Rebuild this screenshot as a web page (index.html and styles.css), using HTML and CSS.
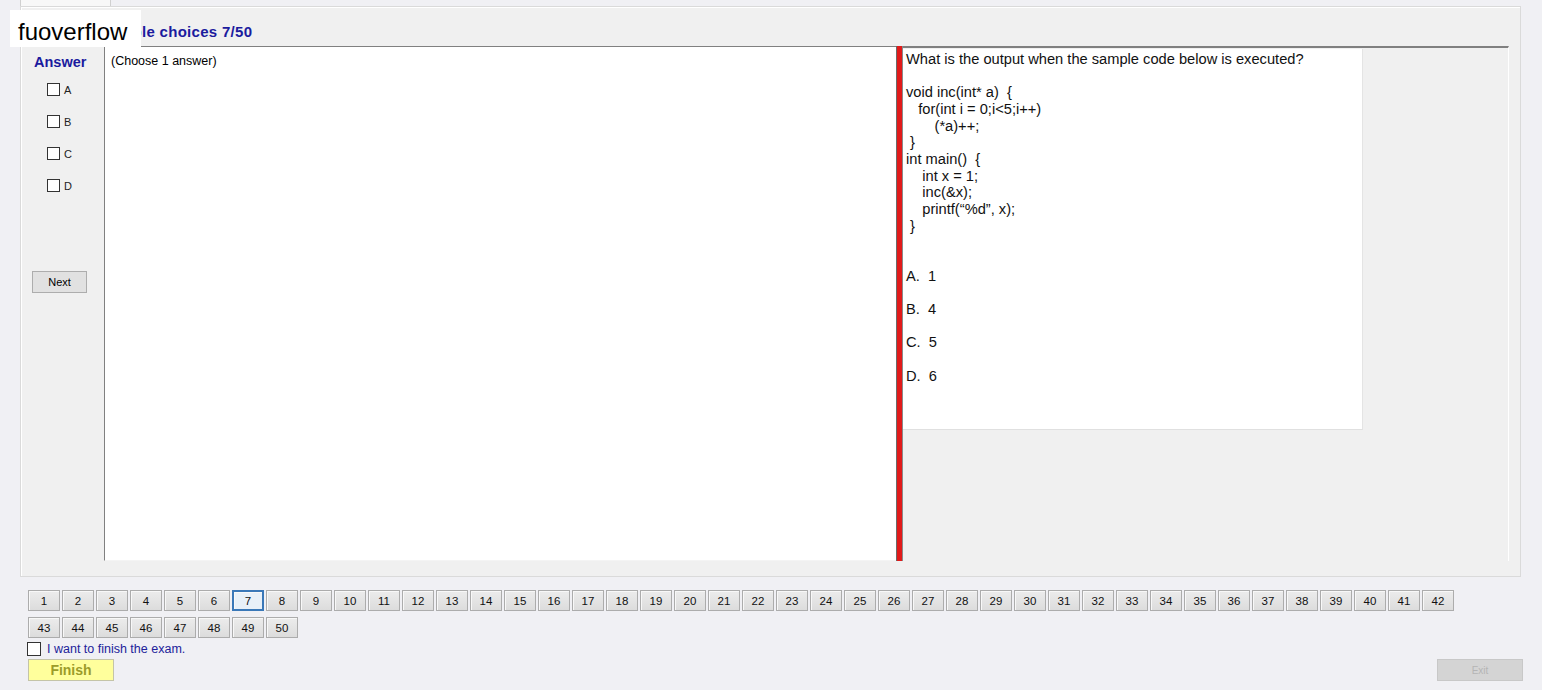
FILE: index.html
```html
<!DOCTYPE html>
<html lang="en">
<head>
    <meta charset="UTF-8">
    <title>Exam</title>
    <link rel="stylesheet" href="styles.css">
</head>
<body>
    <div class="watermark">fuoverflow</div>
    <div class="tabs"><div class="tab"></div></div>
    <div class="page">
        <div class="title">Multiple choices 7/50</div>
        <div class="main">
            <div class="answer-col">
                <div class="answer-title">Answer</div>
                <label class="opt"><span class="box"></span>A</label>
                <label class="opt"><span class="box"></span>B</label>
                <label class="opt"><span class="box"></span>C</label>
                <label class="opt"><span class="box"></span>D</label>
                <button class="btn next">Next</button>
            </div>
            <div class="note-panel">(Choose 1 answer)</div>
            <div class="splitter"></div>
            <div class="question-panel">
                <div class="question">What is the output when the sample code below is executed?

void inc(int* a)  {
   for(int i = 0;i&lt;5;i++)
       (*a)++;
 }
int main()  {
    int x = 1;
    inc(&amp;x);
    printf(“%d”, x);
 }


A.  1

B.  4

C.  5

D.  6</div>
            </div>
        </div>
    </div>
    <div class="numbers" id="numbers"></div>
    <label class="finish-check"><span class="box"></span>I want to finish the exam.</label>
    <div class="bottom">
        <button class="finish">Finish</button>
        <button class="exit">Exit</button>
    </div>
    <script>
        const numbers = document.getElementById('numbers');
        for (let i = 1; i <= 50; i++) {
            const b = document.createElement('button');
            b.className = 'num' + (i === 7 ? ' current' : '');
            b.textContent = i;
            numbers.appendChild(b);
        }
    </script>
</body>
</html>
```

FILE: styles.css
```css
body {
    margin: 0;
    background: #f0f0f4;
    font-family: "Liberation Sans", Arial, sans-serif;
    font-size: 12px;
    color: #000;
    width: 1542px;
    height: 690px;
    overflow: hidden;
}
.watermark {
    position: absolute;
    left: 10px;
    top: 10px;
    width: 131px;
    height: 37px;
    background: #fff;
    font-size: 24px;
    line-height: 37px;
    padding: 3px 0 0 8px;
    box-sizing: border-box;
}
.tabs {
    height: 6px;
    padding-left: 20px;
}
.tab {
    width: 89px;
    height: 6px;
    background: #f8f8f8;
    border-left: 1px solid #d0d0d0;
    border-right: 1px solid #d0d0d0;
}
.page {
    margin-left: 20px;
    width: 1501px;
    height: 571px;
    box-sizing: border-box;
    background: #f0f0f0;
    border: 1px solid #dadada;
    box-shadow: inset 1px 1px #fff;
    padding-left: 7px;
}
.title {
    height: 39px;
    padding-left: 68px;
    box-sizing: border-box;
    padding-top: 16px;
    font-size: 15px;
    letter-spacing: 0.3px;
    font-weight: bold;
    color: #1b1b9e;
}
.main {
    display: flex;
    height: 515px;
    width: 1481px;
}
.answer-col {
    width: 76px;
    display: flex;
    flex-direction: column;
    align-items: flex-start;
}
.answer-title {
    font-size: 14.5px;
    font-weight: bold;
    color: #1b1b9e;
    margin: 8px 0 0 6px;
    height: 17px;
}
.opt {
    display: flex;
    align-items: center;
    height: 13px;
    margin: 12px 0 19px 19px;
    font-size: 11px;
    color: #222;
}
.opt + .opt {
    margin-top: 0;
}
.box {
    width: 11px;
    height: 11px;
    border: 1px solid #333;
    background: #fff;
    margin-right: 6px;
}
.opt .box {
    margin-right: 4px;
}
.btn {
    font-family: inherit;
    font-size: 11px;
    background: #e1e1e1;
    border: 1px solid #adadad;
    padding: 0;
}
.next {
    width: 55px;
    height: 22px;
    margin: 60px 0 0 4px;
}
.note-panel {
    width: 792px;
    box-sizing: border-box;
    background: #fff;
    border-top: 1px solid #808080;
    border-left: 1px solid #808080;
    border-bottom: 1px solid #f4f4f4;
    padding: 7px 0 0 6px;
    font-size: 12.5px;
}
.splitter {
    width: 5px;
    background: #e11a1a;
    border-left: 1px solid #6a6a6a;
    border-right: 1px solid #8a8a8a;
}
.question-panel {
    width: 606px;
    box-sizing: border-box;
    border-top: 2px solid #808080;
    border-right: 1px solid #fff;
    padding-top: 1px;
}
.question {
    width: 460px;
    height: 381px;
    box-sizing: border-box;
    background: #fff;
    border-right: 1px solid #e4e4e4;
    border-bottom: 1px solid #e0e0e0;
    padding: 2px 0 0 3px;
    font-size: 14.67px;
    line-height: 16.67px;
    white-space: pre;
    color: #111;
}
.numbers {
    display: flex;
    flex-wrap: wrap;
    gap: 6px 2px;
    width: 1440px;
    margin: 13px 0 0 28px;
}
.num {
    width: 32px;
    height: 21px;
    padding: 0;
    font-family: inherit;
    font-size: 11.5px;
    color: #111;
    background: linear-gradient(#ececec, #dcdcdc);
    border: 1px solid #acacac;
    box-shadow: inset 1px 1px #f8f8f8;
}
.num.current {
    border: 2px solid #3a78b8;
    background: #e8f0f8;
}
.finish-check {
    display: flex;
    align-items: center;
    margin: 4px 0 0 27px;
    height: 14px;
    color: #22229a;
    font-size: 12.5px;
}
.finish-check .box {
    width: 12px;
    height: 12px;
}
.bottom {
    display: flex;
    justify-content: space-between;
    margin: 3px 19px 0 28px;
}
.finish {
    width: 86px;
    height: 22px;
    padding: 0;
    font-family: inherit;
    font-size: 14px;
    font-weight: bold;
    color: #9c9c2a;
    background: #ffff9c;
    border: 1px solid #c4c4a8;
}
.exit {
    width: 86px;
    height: 22px;
    padding: 0;
    font-family: inherit;
    font-size: 10px;
    color: #b4b4b4;
    background: #d4d4d4;
    border: 1px solid #c8c8c8;
}
```
